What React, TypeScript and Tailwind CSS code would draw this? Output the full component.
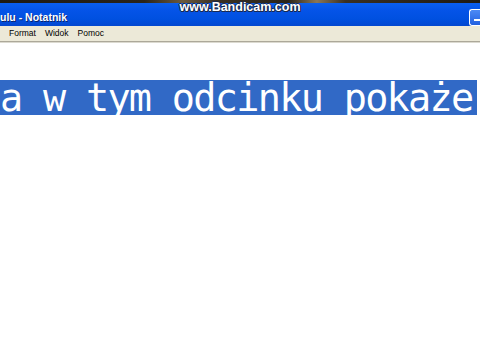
import React from 'react';

const menuItems = ['Format', 'Widok', 'Pomoc'];

export default function App() {
  return (
    <div className="w-[480px] h-[360px] overflow-hidden bg-white flex flex-col relative">
      {/* desktop wallpaper strip */}
      <div className="h-[3px] bg-[linear-gradient(90deg,#1e1a14_0%,#2a241a_30%,#6b5a3e_38%,#3a3022_45%,#2a241a_60%,#8a7656_66%,#3a3022_72%,#1e1a14_100%)]" />

      {/* title bar */}
      <div className="h-[23px] flex items-center bg-[linear-gradient(180deg,#0a5ff0_0%,#0554e8_30%,#0050e0_70%,#0348d0_100%)] relative">
        <span className="text-white font-bold text-[10.5px] leading-none mt-[6px] [font-family:'Liberation_Sans',sans-serif] [text-shadow:1px_1px_0_#0a246a]">
          ulu - Notatnik
        </span>
        <div className="ml-auto mt-[6px] w-[11px] h-[17px] rounded-l-[3px] border border-r-0 border-white bg-[linear-gradient(180deg,#4d8af5,#2160e0)] flex items-end pb-[4px] pl-[4px]">
          <div className="w-[6px] h-[2px] bg-white" />
        </div>
      </div>

      {/* menu bar */}
      <div className="h-[15px] bg-[#ece9d8] flex items-center gap-[9px] pl-[9px] text-[8.5px] text-black [font-family:'Liberation_Sans',sans-serif]">
        {menuItems.map((m) => (
          <span key={m}>{m}</span>
        ))}
      </div>
      <div className="h-[1px] bg-[#aca899]" />
      <div className="h-[1px] bg-[#dcdad0]" />

      {/* editor content */}
      <div className="flex-1 bg-white pt-[37px]">
        <div className="w-[477px] h-[35px] bg-[#3169c6] flex items-center">
          <span className="text-white text-[38.5px] leading-[35px] whitespace-pre [font-family:'DejaVu_Sans_Mono',monospace] tracking-[-1.7px]">
            a w tym odcinku pokaże
          </span>
        </div>
      </div>

      {/* Bandicam watermark */}
      <div className="absolute top-[1px] left-0 right-0 flex justify-center">
        <span className="text-white font-bold text-[12.5px] leading-none [font-family:'Liberation_Sans',sans-serif] [text-shadow:-1px_0_#1a2a50,1px_0_#1a2a50,0_1px_#1a2a50,0_-1px_#1a2a50,1px_1px_#1a2a50]">
          www.Bandicam.com
        </span>
      </div>
    </div>
  );
}
